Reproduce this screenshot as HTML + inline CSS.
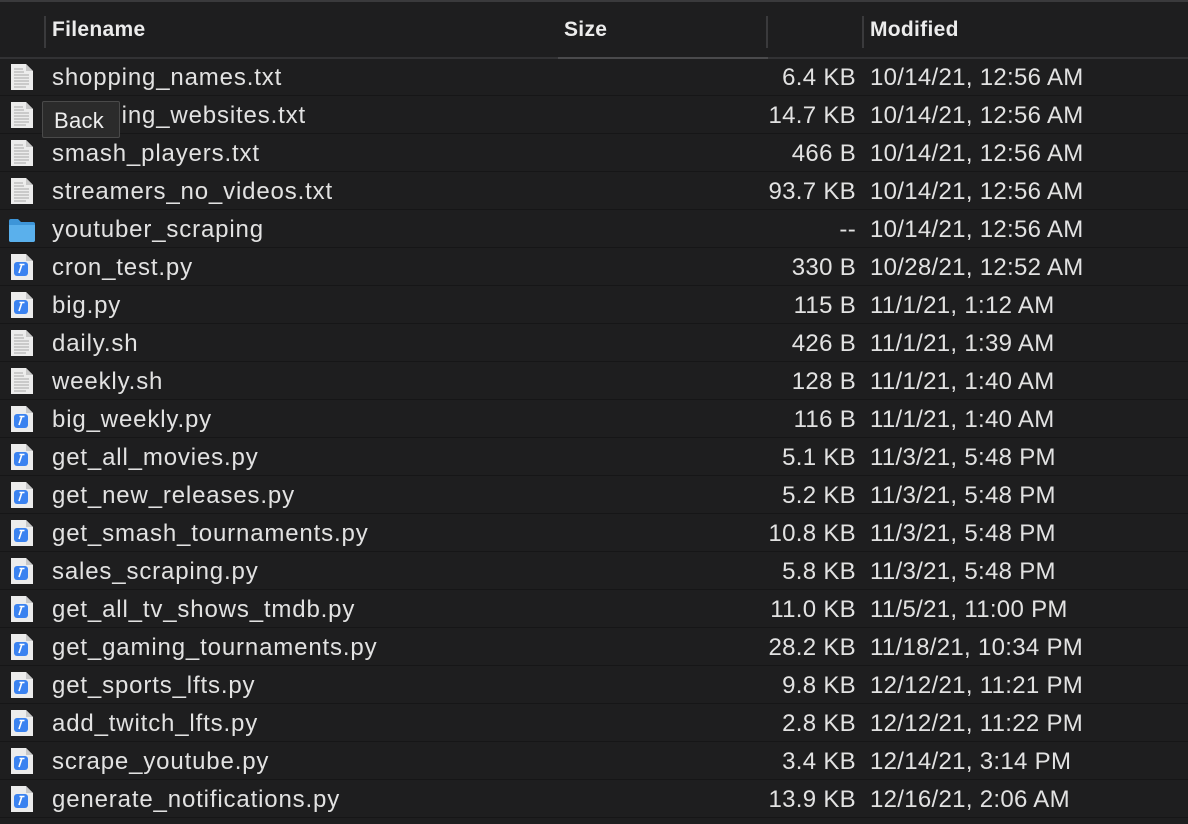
<!DOCTYPE html>
<html><head><style>
body{margin:0;width:1188px;height:824px;background:#1e1e1f;overflow:hidden;font-family:"Liberation Sans",sans-serif;color:#e2e2e2;position:relative}
.top{position:absolute;left:0;top:0;width:1188px;height:2px;background:#3a3a3c}
.hdr{position:absolute;top:2px;left:0;width:1188px;height:55px;background:#1e1e1f;border-bottom:2px solid #323234}
.hdr span{position:absolute;top:16px;font-size:21px;color:#ececec;font-weight:bold;letter-spacing:0.3px}
.div{position:absolute;top:14px;width:2px;height:32px;background:#3a3a3c}
.row{position:absolute;left:0;width:1188px;height:37px;border-bottom:1px solid #161617}
.row span{position:absolute;top:6px;font-size:24px}
.row .n{left:52px;letter-spacing:0.85px}
.row .s{right:332px;letter-spacing:0.3px}
.row .d{left:870px;letter-spacing:0.3px}
.ic{position:absolute;left:10px;top:5px;width:24px;height:28px}
.tip{position:absolute;left:42px;top:101px;width:78px;height:37px;background:#2b2b2b;border:1px solid #4a4a4a;border-radius:2px;font-size:22px;color:#eee;box-sizing:border-box;padding:6px 0 0 11px;letter-spacing:0.3px}
</style></head><body>
<div class="top"></div>
<div class="hdr">
<div class="div" style="left:44px"></div><span style="left:52px">Filename</span>
<span style="left:564px">Size</span>
<div class="div" style="left:766px"></div>
<div class="div" style="left:862px"></div><span style="left:870px">Modified</span>
<div style="position:absolute;left:558px;top:55px;width:210px;height:2px;background:#4a4a4c"></div>
</div>
<svg width="0" height="0" style="position:absolute"><defs>
<symbol id="txt" viewBox="0 0 24 28"><path d="M1 1h15l7 7v19H1z" fill="#ececec"/><path d="M16 1v7h7" fill="#c8c8c8"/><g stroke="#a8a8a8" stroke-width="1"><path d="M4 6h9M4 9h10M4 12h15M4 15h15M4 18h15M4 21h15M4 24h12"/></g></symbol>
<symbol id="py" viewBox="0 0 24 28"><path d="M1 1h15l7 7v19H1z" fill="#ececec"/><path d="M16 1v7h7" fill="#c8c8c8"/><rect x="4" y="9" width="14" height="14" rx="3" fill="#3a82f0"/><path d="M9 20l3-9M9.5 11.5h5" stroke="#fff" stroke-width="1.6" fill="none"/></symbol>
<symbol id="dir" viewBox="0 0 28 26"><path d="M1 4q0-2 2-2h7l3 3h12q2 0 2 2v16q0 2-2 2H3q-2 0-2-2z" fill="#3d95d8"/><path d="M1 8h26v15q0 2-2 2H3q-2 0-2-2z" fill="#5ab0ec"/></symbol>
</defs></svg>
<div id="rows"></div>
<script>
var d=[["txt","shopping_names.txt","6.4 KB","10/14/21, 12:56 AM"],["txt","shopping_websites.txt","14.7 KB","10/14/21, 12:56 AM"],["txt","smash_players.txt","466 B","10/14/21, 12:56 AM"],["txt","streamers_no_videos.txt","93.7 KB","10/14/21, 12:56 AM"],["dir","youtuber_scraping","--","10/14/21, 12:56 AM"],["py","cron_test.py","330 B","10/28/21, 12:52 AM"],["py","big.py","115 B","11/1/21, 1:12 AM"],["txt","daily.sh","426 B","11/1/21, 1:39 AM"],["txt","weekly.sh","128 B","11/1/21, 1:40 AM"],["py","big_weekly.py","116 B","11/1/21, 1:40 AM"],["py","get_all_movies.py","5.1 KB","11/3/21, 5:48 PM"],["py","get_new_releases.py","5.2 KB","11/3/21, 5:48 PM"],["py","get_smash_tournaments.py","10.8 KB","11/3/21, 5:48 PM"],["py","sales_scraping.py","5.8 KB","11/3/21, 5:48 PM"],["py","get_all_tv_shows_tmdb.py","11.0 KB","11/5/21, 11:00 PM"],["py","get_gaming_tournaments.py","28.2 KB","11/18/21, 10:34 PM"],["py","get_sports_lfts.py","9.8 KB","12/12/21, 11:21 PM"],["py","add_twitch_lfts.py","2.8 KB","12/12/21, 11:22 PM"],["py","scrape_youtube.py","3.4 KB","12/14/21, 3:14 PM"],["py","generate_notifications.py","13.9 KB","12/16/21, 2:06 AM"]];
var h="";d.forEach(function(r,i){var ic=r[0]=="dir"?'<svg class="ic" style="left:7px;top:7px;width:30px;height:26px"><use href="#dir"/></svg>':'<svg class="ic"><use href="#'+r[0]+'"/></svg>';
h+='<div class="row" style="top:'+(58+i*38)+'px">'+ic+'<span class="n">'+r[1]+'</span><span class="s">'+r[2]+'</span><span class="d">'+r[3]+'</span></div>';});
document.getElementById("rows").innerHTML=h;
</script>
<div class="tip">Back</div>
</body></html>
